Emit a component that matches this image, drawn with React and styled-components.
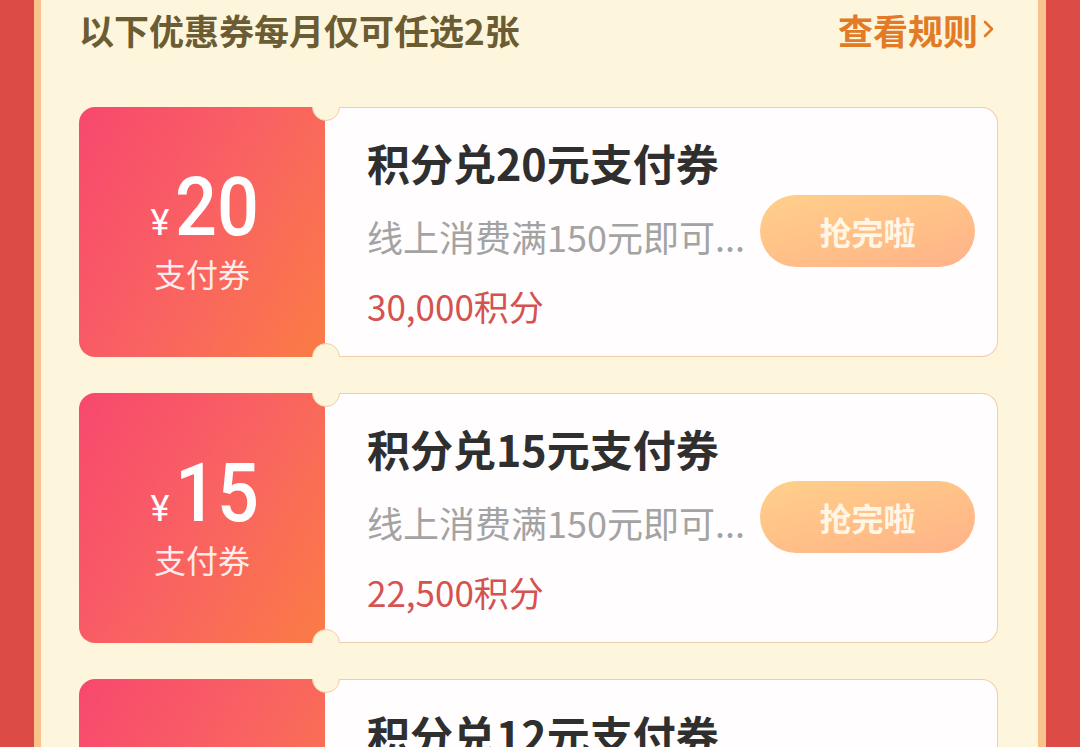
import React from 'react'
import styled, { createGlobalStyle } from 'styled-components'

const GlobalStyle = createGlobalStyle`
  html, body {
    margin: 0;
    padding: 0;
    height: 747px;
    overflow: hidden;
    background: #dc4b45;
  }
  body {
    font-family: "Noto Sans CJK SC", "Noto Sans", sans-serif;
  }
`

const Page = styled.div`
  padding: 0 34px;
  height: 747px;
  background: #dc4b45;
`

const Panel = styled.div`
  height: 100%;
  box-sizing: border-box;
  background: #fdf6dd;
  border-left: 7px solid #f7c28c;
  border-right: 8px solid #f7c28c;
  padding: 0 40px 0 38px;
`

const Header = styled.div`
  display: flex;
  align-items: center;
  justify-content: space-between;
  height: 58px;
  margin-bottom: 49px;
`

const HeaderTitle = styled.div`
  font-size: 35px;
  font-weight: 700;
  color: #6b5c33;
`

const RuleLink = styled.div`
  display: flex;
  align-items: center;
  gap: 4px;
  font-size: 35px;
  font-weight: 700;
  color: #e27a26;
  margin-right: 2px;
`

const List = styled.div`
  display: flex;
  flex-direction: column;
  gap: 36px;
`

const Card = styled.div`
  position: relative;
  display: flex;
  height: 250px;
  overflow: hidden;
`

const Notch = styled.span`
  position: absolute;
  left: 233px;
  ${({ bottom }) => (bottom ? 'bottom: -14px;' : 'top: -14px;')}
  width: 26px;
  height: 26px;
  border-radius: 50%;
  background: #fdf6dd;
  border: 1.5px solid #f1cca9;
  z-index: 2;
`

const Face = styled.div`
  flex: 0 0 246px;
  display: flex;
  flex-direction: column;
  align-items: center;
  justify-content: center;
  border-radius: 16px 0 0 16px;
  background: linear-gradient(120deg, #f8486e 0%, #f96262 50%, #fb7c45 100%);
  color: #fff;
`

const Amount = styled.div`
  display: flex;
  align-items: baseline;
  line-height: 1;
  margin-top: -2px;
  margin-left: 6px;
`

const Yen = styled.span`
  font-family: "Roboto", "Liberation Sans", sans-serif;
  font-size: 36px;
  margin-right: 6px;
`

const Value = styled.span`
  display: inline-block;
  font-family: "Roboto", "Liberation Sans", sans-serif;
  font-weight: 500;
  font-size: 82px;
  transform: scaleX(0.9);
  transform-origin: left center;
  margin-right: -9px;
`

const FaceLabel = styled.div`
  font-size: 32px;
  color: rgba(255, 255, 255, 0.88);
  margin-top: 2px;
`

const Body = styled.div`
  flex: 1;
  display: flex;
  align-items: center;
  justify-content: space-between;
  box-sizing: border-box;
  padding: 0 22px 0 42px;
  background: #fffdfd;
  border: 1.5px solid #f1cca9;
  border-left: none;
  border-radius: 0 16px 16px 0;
`

const Info = styled.div`
  display: flex;
  flex-direction: column;
  align-self: flex-start;
  padding-top: 29px;
`

const Title = styled.div`
  font-size: 43px;
  font-weight: 700;
  color: #2f2f2f;
  line-height: 50px;
`

const Desc = styled.div`
  font-size: 36px;
  color: #a3a3a3;
  line-height: 50px;
  margin-top: 24px;
  white-space: nowrap;
`

const Points = styled.div`
  font-size: 35px;
  color: #d4524f;
  line-height: 50px;
  margin-top: 20px;
`

const GrabButton = styled.div`
  width: 215px;
  height: 72px;
  border-radius: 36px;
  display: flex;
  align-items: center;
  justify-content: center;
  background: linear-gradient(165deg, #ffd08b 0%, #ffbe87 60%, #ffb28b 100%);
  color: #fff6e6;
  font-size: 32px;
  font-weight: 700;
  margin-top: -2px;
`

const coupons = [
  { value: 20, points: '30,000' },
  { value: 15, points: '22,500' },
  { value: 12, points: '18,000' },
]

export default function App() {
  return (
    <>
      <GlobalStyle />
      <Page>
        <Panel>
          <Header>
            <HeaderTitle>以下优惠券每月仅可任选2张</HeaderTitle>
            <RuleLink>
              查看规则
              <svg width="14" height="22" viewBox="0 0 14 22" fill="none">
                <path d="M3 4l7 7-7 7" stroke="#e27a26" strokeWidth="2.6" strokeLinecap="round" strokeLinejoin="round" />
              </svg>
            </RuleLink>
          </Header>
          <List>
            {coupons.map((c) => (
              <Card key={c.value}>
                <Notch />
                <Notch bottom />
                <Face>
                  <Amount>
                    <Yen>¥</Yen>
                    <Value>{c.value}</Value>
                  </Amount>
                  <FaceLabel>支付券</FaceLabel>
                </Face>
                <Body>
                  <Info>
                    <Title>积分兑{c.value}元支付券</Title>
                    <Desc>线上消费满150元即可...</Desc>
                    <Points>{c.points}积分</Points>
                  </Info>
                  <GrabButton>抢完啦</GrabButton>
                </Body>
              </Card>
            ))}
          </List>
        </Panel>
      </Page>
    </>
  )
}
